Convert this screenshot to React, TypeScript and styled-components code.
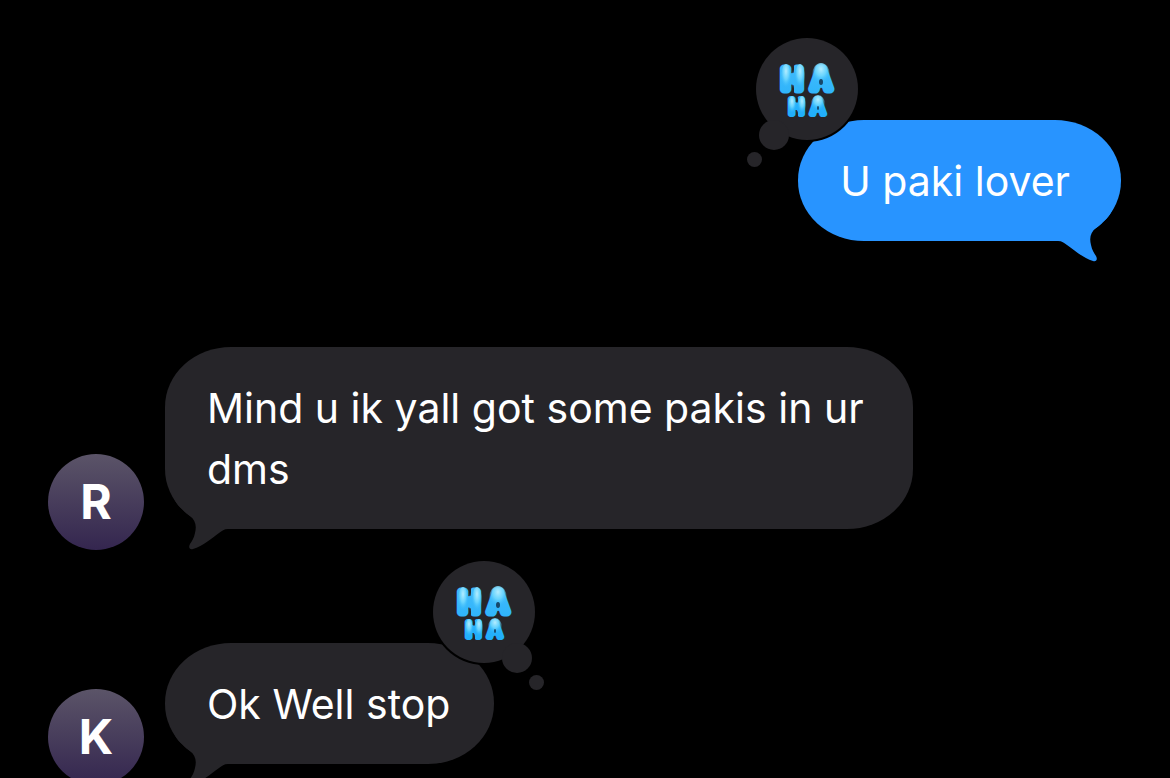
import React from "react";
import styled, { createGlobalStyle, css } from "styled-components";

type Side = "sent" | "received";

interface Message {
  id: number;
  side: Side;
  text: string;
  sender?: string;
  laughed?: boolean;
}

const colors = {
  page: "#000000",
  sent: "#2894ff",
  received: "#262529",
  text: "#ffffff",
};

const messages: Message[] = [
  { id: 1, side: "sent", text: "U paki lover", laughed: true },
  {
    id: 2,
    side: "received",
    sender: "R",
    text: "Mind u ik yall got some pakis in ur dms",
  },
  { id: 3, side: "received", sender: "K", text: "Ok Well stop", laughed: true },
];

const GlobalStyle = createGlobalStyle`
  *, *::before, *::after { box-sizing: border-box; }
  body {
    margin: 0;
    background: ${colors.page};
    color: ${colors.text};
    font-family: Inter, "Liberation Sans", sans-serif;
  }
`;

const Page = styled.main`
  height: 100vh;
  overflow: hidden;
  background: ${colors.page};
`;

const Thread = styled.ol`
  display: flex;
  flex-direction: column;
  margin: 0;
  padding: 120px 49px 0 48px;
  list-style: none;
`;

const Row = styled.li<{ $side: Side }>`
  display: flex;
  align-items: flex-end;
  gap: 21px;
  justify-content: ${(p) => (p.$side === "sent" ? "flex-end" : "flex-start")};
  padding-bottom: 21px;

  & + & {
    margin-top: 93px;
  }
  &:first-child {
    margin-bottom: -8px;
  }
`;

const Avatar = styled.div`
  display: flex;
  flex: none;
  align-items: center;
  justify-content: center;
  width: 96px;
  height: 96px;
  margin-bottom: -21px;
  border-radius: 50%;
  background: linear-gradient(#5b5468, #34264f);
  font-size: 48px;
  font-weight: 700;
  line-height: 96px;
`;

const Bubble = styled.div<{ $side: Side }>`
  position: relative;
  max-width: 748px;
  padding: ${(p) => (p.$side === "sent" ? "31px 51px 29px 42px" : "31px 44px 29px 42px")};
  border-radius: 66px / 60px;
  background: ${(p) => colors[p.$side]};
`;

const Text = styled.p`
  margin: 0;
  font-size: 41px;
  line-height: 61px;
`;

const TailShape = styled.svg<{ $side: Side }>`
  position: absolute;
  bottom: -21px;
  width: 70px;
  height: 62px;
  fill: ${(p) => colors[p.$side]};
  ${(p) =>
    p.$side === "sent"
      ? css`
          right: 1px;
        `
      : css`
          left: 1px;
          transform: scaleX(-1);
        `}
`;

const Reaction = styled.div<{ $side: Side }>`
  position: absolute;
  top: -82px;
  width: 102px;
  height: 102px;
  border-radius: 50%;
  background: ${colors.received};
  box-shadow: 0 0 0 2px ${colors.page};
  ${(p) => (p.$side === "sent" ? "left: -42px;" : "right: -41px;")}

  &::before,
  &::after {
    content: "";
    position: absolute;
    border-radius: 50%;
    background: ${colors.received};
  }
  &::before {
    top: 82px;
    width: 30px;
    height: 30px;
    ${(p) => (p.$side === "sent" ? "left: 3px;" : "right: 3px;")}
  }
  &::after {
    top: 114px;
    width: 15px;
    height: 15px;
    ${(p) => (p.$side === "sent" ? "left: -9px;" : "right: -9px;")}
  }
`;

const HahaArt = styled.svg`
  position: absolute;
  top: 22px;
  left: 21px;
  width: 60px;
  height: 60px;
  font-family: Inter, sans-serif;
  font-weight: 400;
`;

function Tail({ side }: { side: Side }) {
  return (
    <TailShape $side={side} viewBox="0 -20 70 62" aria-hidden="true">
      <path d="M65 -16C62 -8 58 -2 54 1C51 4 49 6 46 8C41 12 39 17 41 25C42 30 44 33 46 36C48 40 46 42 43 41C33 38 24 30 17 25C14 23 12 21 8 21H0V-16Z" />
    </TailShape>
  );
}

function Haha({ id }: { id: string }) {
  const edge = `url(#${id}-edge)`;
  const puff = `url(#${id}-puff)`;
  return (
    <HahaArt viewBox="0 0 60 60" role="img" aria-label="Haha">
      <defs>
        <linearGradient id={`${id}-edge`} gradientUnits="userSpaceOnUse" x1="0" y1="0" x2="0" y2="60">
          <stop offset="0" stopColor="#45bcfb" />
          <stop offset="1" stopColor="#1eaefb" />
        </linearGradient>
        <radialGradient id={`${id}-puff`} cx="0.5" cy="0.25" r="0.6">
          <stop offset="0" stopColor="#b5edff" />
          <stop offset="0.5" stopColor="#74dbff" stopOpacity="0.8" />
          <stop offset="1" stopColor="#35b9fc" stopOpacity="0" />
        </radialGradient>
      </defs>
      <g fill={edge} stroke={edge} strokeLinejoin="round">
        <text y="29" fontSize="27" strokeWidth="9">
          <tspan x="5">H</tspan>
          <tspan x="35">A</tspan>
        </text>
        <text y="54" fontSize="20" strokeWidth="6">
          <tspan x="12">H</tspan>
          <tspan x="34">A</tspan>
        </text>
      </g>
      <g fill={puff}>
        <ellipse cx="9" cy="18" rx="5" ry="14" />
        <ellipse cx="23" cy="18" rx="5" ry="14" />
        <ellipse cx="44" cy="15" rx="9" ry="12" />
        <ellipse cx="15" cy="46" rx="4" ry="10" />
        <ellipse cx="25" cy="46" rx="4" ry="10" />
        <ellipse cx="41" cy="44" rx="7" ry="9" />
      </g>
      <g fill={colors.received}>
        <ellipse cx="16" cy="8" rx="1" ry="5" />
        <ellipse cx="16" cy="30" rx="1" ry="5" />
        <ellipse cx="20" cy="40" rx="1" ry="3" />
        <ellipse cx="20" cy="55" rx="1" ry="4" />
      </g>
      <g fill="#17476a">
        <ellipse cx="44" cy="22" rx="2" ry="3" />
        <ellipse cx="41" cy="48" rx="1" ry="2" />
      </g>
    </HahaArt>
  );
}

export default function App() {
  return (
    <>
      <GlobalStyle />
      <Page>
        <Thread>
          {messages.map((m) => (
            <Row key={m.id} $side={m.side}>
              {m.sender && <Avatar>{m.sender}</Avatar>}
              <Bubble $side={m.side}>
                <Tail side={m.side} />
                <Text>{m.text}</Text>
                {m.laughed && (
                  <Reaction $side={m.side}>
                    <Haha id={`haha-${m.id}`} />
                  </Reaction>
                )}
              </Bubble>
            </Row>
          ))}
        </Thread>
      </Page>
    </>
  );
}
